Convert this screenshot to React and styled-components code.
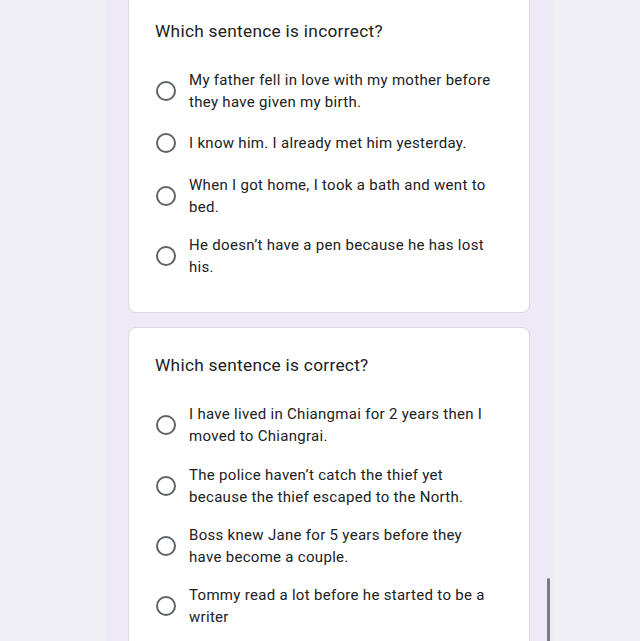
import React from "react";
import styled, { createGlobalStyle } from "styled-components";

const Global = createGlobalStyle`
  html, body { margin: 0; padding: 0; background: #f0eff5; overflow: hidden; }
  body { font-family: Roboto, "Noto Sans", Arial, sans-serif; }
`;

const Page = styled.div`
  width: 640px;
  height: 641px;
  overflow: hidden;
  position: relative;
  background: #f0eff5;
`;

const Column = styled.div`
  width: 448px;
  margin-left: 105px;
  min-height: 700px;
  background: #ede9f7;
  padding: 0 23px;
  box-sizing: border-box;
  display: flex;
  flex-direction: column;
  gap: 14px;
  margin-top: -7px;
`;

const Card = styled.div`
  background: #ffffff;
  border: 1px solid #dcd9e3;
  border-radius: 8px;
  padding: 25px 26px 26px 26px;
  box-sizing: border-box;
`;

const Question = styled.div`
  font-family: Roboto, "Noto Sans", sans-serif;
  font-size: 17.3px;
  line-height: 24px;
  color: #202124;
  letter-spacing: 0.28px;
  margin-bottom: 18px;
`;

const Options = styled.div`
  display: flex;
  flex-direction: column;
`;

const Option = styled.label`
  display: flex;
  align-items: center;
  padding: 8.15px 0;
  min-height: 28px;
`;

const Radio = styled.span`
  flex: none;
  width: 20px;
  height: 20px;
  box-sizing: border-box;
  border: 2px solid #5f6368;
  border-radius: 50%;
  margin-left: 1px;
  margin-right: 13px;
`;

const Label = styled.span`
  font-size: 15px;
  line-height: 22px;
  color: #202124;
  letter-spacing: 0.3px;
  padding-right: 10px;
`;

const Scrollbar = styled.div`
  position: absolute;
  left: 547px;
  top: 578px;
  width: 3px;
  height: 80px;
  border-radius: 2px 2px 0 0;
  background: #7b7983;
`;

const questions = [
  {
    q: "Which sentence is incorrect?",
    options: [
      "My father fell in love with my mother before they have given my birth.",
      "I know him. I already met him yesterday.",
      "When I got home, I took a bath and went to bed.",
      "He doesn\u2019t have a pen because he has lost his.",
    ],
  },
  {
    q: "Which sentence is correct?",
    options: [
      "I have lived in Chiangmai for 2 years then I moved to Chiangrai.",
      "The police haven\u2019t catch the thief yet because the thief escaped to the North.",
      "Boss knew Jane for 5 years before they have become a couple.",
      "Tommy read a lot before he started to be a writer",
    ],
  },
];

export default function App() {
  return (
    <Page>
      <Global />
      <Column>
        {questions.map((item) => (
          <Card key={item.q}>
            <Question>{item.q}</Question>
            <Options>
              {item.options.map((o) => (
                <Option key={o}>
                  <Radio />
                  <Label>{o}</Label>
                </Option>
              ))}
            </Options>
          </Card>
        ))}
      </Column>
      <Scrollbar />
    </Page>
  );
}
